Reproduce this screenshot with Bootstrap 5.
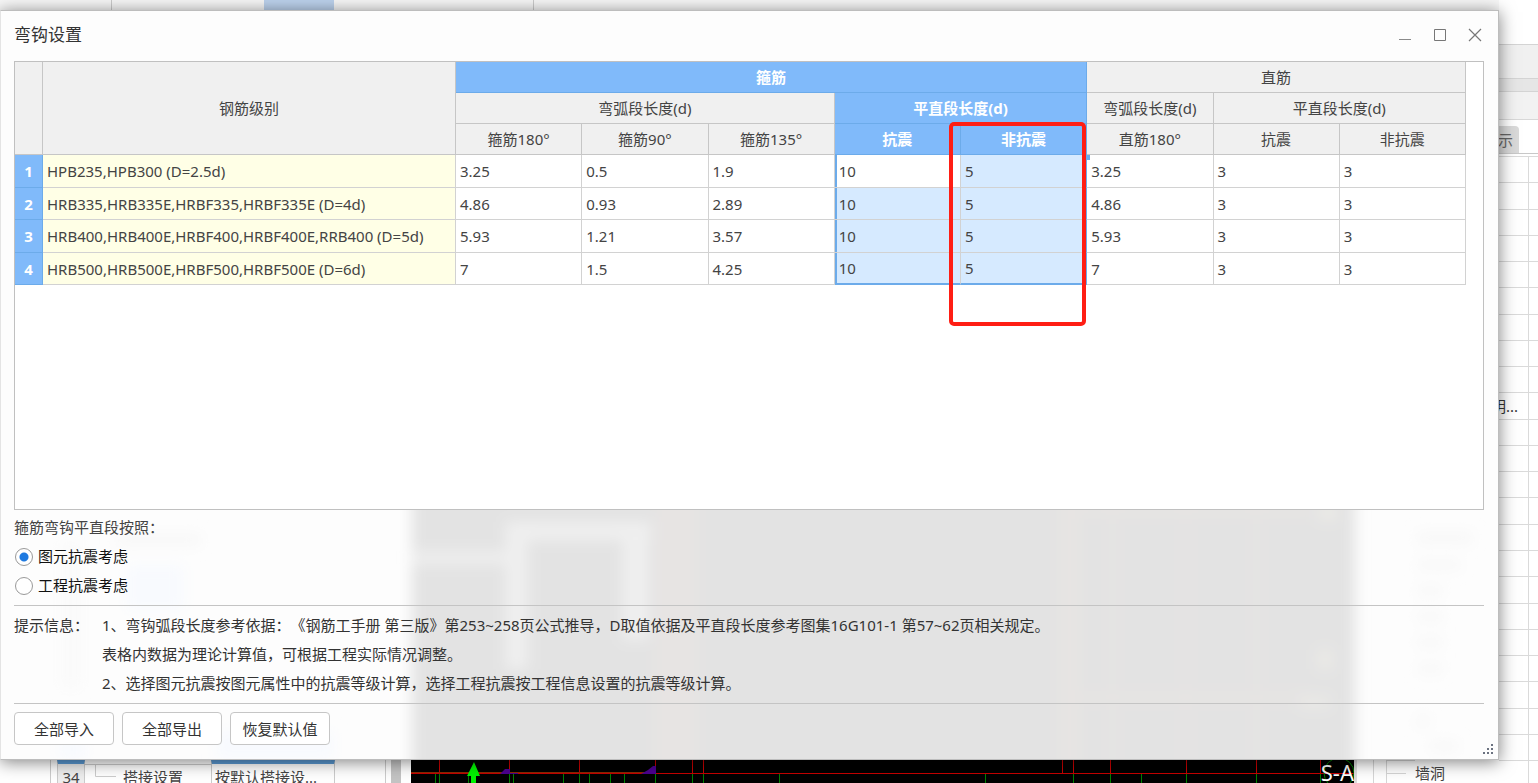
<!DOCTYPE html>
<html lang="zh-CN">
<head>
<meta charset="utf-8">
<meta name="viewport" content="width=device-width, initial-scale=1">
<title>弯钩设置</title>
<link href="https://cdn.jsdelivr.net/npm/bootstrap@5.3.0/dist/css/bootstrap.min.css" rel="stylesheet">
<style>
  :root { --line: #c6c6c6; --sel: #80bafa; --sel-line: #6cabea; --sel-soft: #d6eaff; }
  body { font: 15px/20px "Noto Sans", "Noto Sans CJK SC", sans-serif; color: #444; background: #fff; text-spacing-trim: space-all; }
  .desk { display: grid; grid-template: 10px 1fr 23px / minmax(0, 1fr) 39px; min-height: 100vh; overflow: hidden; }

  /* application window behind the dialog */
  .ribbon-strip { grid-column: 1; background: #f8f8f8; }
  .ribbon-strip > span { border-right: 1px solid #ccc; }
  .ribbon-a { width: 112px; }
  .ribbon-b { width: 152px; border: 0 !important; }
  .ribbon-on { width: 70px; background: #bdd3ee; border: 0 !important; }
  .ribbon-c { width: 200px; }
  .side-strip { grid-area: 1 / 2 / 4 / 3; }
  .side-a { height: 44px; }
  .side-b { height: 34px; background: #f0f0f0; border-top: 1px solid #d4d4d4; }
  .side-c { height: 14px; background: #e6e6e6; border: solid #d4d4d4; border-width: 1px 0; }
  .side-d { height: 28px; background: #f2f2f2; border-bottom: 1px solid #d8d8d8; }
  .side-tabs { height: 34px; border-bottom: 1px solid #c8c8c8; }
  .side-tab { width: 20px; height: 27px; padding-right: 6px; background: #d9d9d9; border-radius: 0 4px 0 0; color: #666; }
  .side-gap { height: 3px; border-bottom: 1px solid #dadada; }
  .side-row { flex: 1 1 0; border-bottom: 1px solid #dadada; min-height: 0; }
  .side-row > span { width: 30px; height: 100%; border-right: 1px solid #dadada; padding-right: 10px; overflow: hidden; white-space: nowrap; color: #333; }
  .side-last { flex: 0 0 22px; border: 0; }

  .foot-strip { grid-area: 3 / 1; overflow: hidden; height: 23px; }
  .foot-tree { width: 411px; line-height: 26px; }
  .foot-tree > * { height: 33px; white-space: nowrap; }
  .ft-margin { width: 51px; border-right: 1px solid #ccc; }
  .ft-space { width: 6px; }
  .ft-num { width: 28px; background: #eee; border: solid #ccc; border-width: 0 1px; border-top: 4px solid #5b9bd5; text-align: center; }
  .ft-branch { width: 38px; }
  .ft-name { width: 88px; border-top: 1px solid #ccc; margin-top: 4px; line-height: 24px; }
  .ft-value { width: 124px; border: solid #ccc; border-width: 0 1px; border-top: 4px solid #5b9bd5; padding-left: 3px; }
  .ft-rest { width: 51px; border-right: 1px solid #ccc; }
  .ft-bar { width: 10px; background: #c4c4c4; margin-left: 5px; }
  .cad { background: #000; overflow: hidden; }
  .cad-name { position: absolute; right: 0; top: 0; color: #fff; font-size: 22px; line-height: 24px; }
  .foot-side { width: 145px; border-left: 3px solid #ddd; line-height: 27px; color: #444; }

  /* dialog */
  .dlg { grid-area: 2 / 1; z-index: 2; background: #fdfdfd; border: 1px solid #bdbdbd; border-left-color: #e4e4e4; box-shadow: 0 2px 16px rgba(0,0,0,.5); padding: 0 14px 0 13px; }
  .dlg-head { height: 50px; margin-right: -8px; padding-bottom: 3px; }
  .dlg-title { font-size: 17px; line-height: 24px; margin: 0; font-weight: 400; color: #333; }
  .win-btn { width: 35px; height: 30px; border: 0; background: none; padding: 0; }
  .win-btn svg { display: block; margin: auto; }
  .sheet { border: 1px solid #c0c0c0; background: #fff; padding-right: 17px; min-height: 260px; }
  .hooks { table-layout: fixed; border-collapse: separate; border-spacing: 0; width: 100%; }
  .hooks .c-no { width: 28px; }
  .hooks .c-grade { width: 413px; }
  .hooks th, .hooks td { border: solid #d2d2d2; border-width: 0 1px 1px 0; height: 32px; padding: 0 4px; white-space: nowrap; }
  .hooks tbody tr:nth-child(odd) > * { height: 33px; }
  .hooks thead th { height: 31px; background: #f0f0f0; border-color: var(--line); font-weight: 400; text-align: center; }
  .hooks thead th.on, .hooks tbody th { background: var(--sel); border-color: var(--sel-line); color: #fff; font-weight: 700; text-align: center; }
  .hooks .grade { background: #ffffe6; }
  .hooks .pick { background: var(--sel-soft); }
  .hooks .edge-l { box-shadow: inset 2px 0 var(--sel-line); }
  .hooks .edge-r { border-right: 2px solid var(--sel-line); }
  .hooks tbody tr:last-child .edge-l, .hooks tbody tr:last-child .edge-r { border-bottom: 2px solid var(--sel-line); }
  .marker { position: absolute; z-index: 3; top: -2px; left: -12px; right: 0; height: 204px; border: 4px solid #ff1e14; border-radius: 5px; }
  .grip-dot { position: absolute; z-index: 2; right: -4px; bottom: -6px; width: 4px; height: 5px; background: var(--sel-line); }

  .lower { margin: 0 -14px 0 -13px; padding: 3px 14px 14px 13px; }
  .frost { position: absolute; left: 0; top: 0; width: 100%; height: 100%; }
  .opt-line { line-height: 29px; height: 29px; }
  .opt-line .form-check-input { width: 18px; height: 18px; margin: 0 5px 0 1px; border: 1px solid #999; background-color: #fff; box-shadow: none; }
  .opt-line .form-check-input:checked { background-image: radial-gradient(circle, #1f7ae0 0 4px, transparent 5px); }
  .opt-line label { color: #111; }
  .rule { border: 0; border-top: 1px solid #c4c4c4; opacity: 1; margin: 5px 0; }
  .tips { line-height: 29px; color: #333; }
  .tips-label { width: 88px; flex: none; }
  .act { width: 100px; height: 33px; padding: 0; border: 1px solid #c6c6c6; border-radius: 4px; background: #fff; color: #333; font-size: 15px; line-height: 20px; }
  .act:hover { background: #f3f8ff; border-color: var(--sel-line); }
  .size-grip { position: absolute; right: 3px; bottom: 3px; }
</style>
</head>
<body>
<div class="desk">
  <div class="ribbon-strip d-flex">
    <span class="ribbon-a"></span><span class="ribbon-b"></span><span class="ribbon-on"></span><span class="ribbon-c"></span>
  </div>

  <main class="dlg d-flex flex-column position-relative" role="dialog" aria-labelledby="dlgTitle">
    <header class="dlg-head d-flex align-items-center">
      <h1 class="dlg-title flex-grow-1" id="dlgTitle">弯钩设置</h1>
      <button class="win-btn" type="button" aria-label="最小化"><svg width="14" height="14" fill="none" stroke="#8a8a8a"><path d="M1 11.500h12"/></svg></button>
      <button class="win-btn" type="button" aria-label="最大化"><svg width="14" height="14" fill="none" stroke="#777"><path d="M1.500 1.500h11v11h-11z"/></svg></button>
      <button class="win-btn" type="button" aria-label="关闭"><svg width="14" height="14" fill="none" stroke="#777" stroke-width="1.200"><path d="M1 1l12 12M13 1L1 13"/></svg></button>
    </header>

    <section class="sheet flex-grow-1">
      <table class="hooks">
        <colgroup><col class="c-no"><col class="c-grade"><col span="8"></colgroup>
        <thead>
          <tr><th rowspan="3"></th><th rowspan="3">钢筋级别</th><th colspan="5" class="on">箍筋</th><th colspan="3">直筋</th></tr>
          <tr><th colspan="3">弯弧段长度(d)</th><th colspan="2" class="on">平直段长度(d)</th><th>弯弧段长度(d)</th><th colspan="2">平直段长度(d)</th></tr>
          <tr><th>箍筋180°</th><th>箍筋90°</th><th>箍筋135°</th><th class="on">抗震</th><th class="on position-relative">非抗震<span class="marker"></span><span class="grip-dot"></span></th><th>直筋180°</th><th>抗震</th><th>非抗震</th></tr>
        </thead>
        <tbody>
          <tr><th>1</th><td class="grade">HPB235,HPB300 (D=2.5d)</td><td>3.25</td><td>0.5</td><td>1.9</td><td class="edge-l">10</td><td class="pick edge-r">5</td><td>3.25</td><td>3</td><td>3</td></tr>
          <tr><th>2</th><td class="grade">HRB335,HRB335E,HRBF335,HRBF335E (D=4d)</td><td>4.86</td><td>0.93</td><td>2.89</td><td class="pick edge-l">10</td><td class="pick edge-r">5</td><td>4.86</td><td>3</td><td>3</td></tr>
          <tr><th>3</th><td class="grade">HRB400,HRB400E,HRBF400,HRBF400E,RRB400 (D=5d)</td><td>5.93</td><td>1.21</td><td>3.57</td><td class="pick edge-l">10</td><td class="pick edge-r">5</td><td>5.93</td><td>3</td><td>3</td></tr>
          <tr><th>4</th><td class="grade">HRB500,HRB500E,HRBF500,HRBF500E (D=6d)</td><td>7</td><td>1.5</td><td>4.25</td><td class="pick edge-l">10</td><td class="pick edge-r">5</td><td>7</td><td>3</td><td>3</td></tr>
        </tbody>
      </table>
    </section>

    <section class="lower position-relative">
      <!-- frosted view of the drawing area under the dialog -->
      <svg class="frost" viewBox="0 0 1498 250" preserveAspectRatio="none" aria-hidden="true">
        <defs>
          <filter id="soft" x="-10%" y="-30%" width="120%" height="160%"><feGaussianBlur stdDeviation="7"/></filter>
        </defs>
        <g filter="url(#soft)">
          <path fill="#e3e3e3" d="M411-30h944v310H411z"/>
          <path fill="#efefef" d="M505 12h145v18H505zM505 20h22v140h-22zM411 42h100v12H411zM622 20h26v110h-26z"/>
          <path fill="#e7e4e3" d="M655-20h40v290h-40zM1060-10h18v280h-18zM1110-10h5v270h-5zM1183-10h5v270h-5zM1254-10h5v270h-5zM1060 184h250v8h-250zM1060-5h250v10h-250z"/>
          <path fill="#ebeae6" d="M1318-5h20v15h-20zM1318 140h14v20h-14zM1300 188h30v10h-30z"/>
          <path fill="#f7f7f7" d="M115 24h85v12h-85zM1417 22h56v12h-56zM1417 50h44v10h-44zM1417 76h26v10h-26zM1417 102h26v10h-26zM1417 128h26v10h-26zM1417 154h26v10h-26zM1417 206h12v12h-12zM1430 232h28v10h-28z"/>
          <path fill="#fafafa" d="M60 30h20v150H60z"/>
          <path fill="#f8fafe" d="M125 55h58v45h-58zM57 230h28v20H57zM215 222h118v28H215z"/>
        </g>
      </svg>
      <div class="position-relative">
        <div class="opt-line" id="basis">箍筋弯钩平直段按照：</div>
        <div role="radiogroup" aria-labelledby="basis">
          <div class="opt-line d-flex align-items-center"><input class="form-check-input" type="radio" name="basis" id="byPart" checked><label for="byPart">图元抗震考虑</label></div>
          <div class="opt-line d-flex align-items-center"><input class="form-check-input" type="radio" name="basis" id="byProject"><label for="byProject">工程抗震考虑</label></div>
        </div>
        <hr class="rule">
        <div class="tips d-flex">
          <div class="tips-label">提示信息：</div>
          <div>
            <div>1、弯钩弧段长度参考依据：《钢筋工手册 第三版》第253~258页公式推导，D取值依据及平直段长度参考图集16G101-1 第57~62页相关规定。</div>
            <div>表格内数据为理论计算值，可根据工程实际情况调整。</div>
            <div>2、选择图元抗震按图元属性中的抗震等级计算，选择工程抗震按工程信息设置的抗震等级计算。</div>
          </div>
        </div>
        <hr class="rule mb-0">
        <div class="d-flex gap-2 pt-2">
          <button class="act" type="button">全部导入</button>
          <button class="act" type="button">全部导出</button>
          <button class="act" type="button">恢复默认值</button>
        </div>
      </div>
      <svg class="size-grip" width="12" height="12" fill="#6b7280" aria-hidden="true"><path d="M8 0h2v2H8zM4 4h2v2H4zM8 4h2v2H8zM0 8h2v2H0zM4 8h2v2H4zM8 8h2v2H8z"/></svg>
    </section>
  </main>

  <div class="foot-strip d-flex">
    <div class="foot-tree d-flex flex-shrink-0">
      <span class="ft-margin"></span><span class="ft-space"></span>
      <span class="ft-num">34</span>
      <svg class="ft-branch" fill="none" stroke="#ccc"><path d="M0 4.500h38M10.500 4v12.500H31"/></svg>
      <span class="ft-name">搭接设置</span>
      <span class="ft-value">按默认搭接设...</span>
      <span class="ft-rest"></span><span class="ft-bar"></span>
    </div>
    <div class="cad flex-grow-1 position-relative">
      <svg class="d-block w-100" height="23" viewBox="0 0 943 23" preserveAspectRatio="xMinYMin slice" fill="none" aria-hidden="true">
        <path stroke="#008200" d="M24.500 13v10M28.500 13v10M57.500 13v10M98.500 13v10M102.500 13v10M152.500 13v10M168.500 13v10M178.500 13v10M199.500 13v10M213.500 13v10M244.500 13v10M281.500 13v10M292.500 13v10M368.500 13v10M574.500 13v10M662.500 13v10M699.500 13v10M730.500 13v10M775.500 13v10M845.500 13v10M909.500 13v10"/>
        <path stroke="#c80000" d="M28.500 0v13M98.500 0v13M168.500 0v13M244.500 0v13M281.500 0v13M292.500 0v13M651.500 0v13M662.500 0v13M699.500 0v13M775.500 0v13M845.500 0v13M909.500 0v13M0 13.500h943"/>
        <path stroke="#8c2a00" d="M0 12.500h244"/>
        <path fill="#4b0090" d="M89 14l5-5h5v4h8v1zM230 14l7-4 5-4h3v8z"/>
        <ellipse cx="928" cy="13" rx="15" ry="15" stroke="#008200"/>
        <path fill="#00f400" d="M63 2l6 14h-4v8h-5v-8h-4z"/>
      </svg>
      <span class="cad-name">S-A</span>
    </div>
    <div class="foot-side d-flex flex-shrink-0">
      <svg width="58" height="23" fill="none" stroke="#d6d6d6"><path d="M16.500 0v23M29.500 0v23M29 .5h29M29 13.500h20"/></svg>
      <span>墙洞</span>
    </div>
  </div>

  <aside class="side-strip d-flex flex-column">
    <div class="side-a"></div><div class="side-b"></div><div class="side-c"></div><div class="side-d"></div>
    <div class="side-tabs d-flex align-items-end"><span class="side-tab d-flex align-items-center justify-content-end overflow-hidden">示</span></div>
    <div class="side-gap"></div>
    <div class="side-row"><span class="d-block"></span></div>
    <div class="side-row"><span class="d-block"></span></div>
    <div class="side-row"><span class="d-block"></span></div>
    <div class="side-row"><span class="d-block"></span></div>
    <div class="side-row"><span class="d-block"></span></div>
    <div class="side-row"><span class="d-block"></span></div>
    <div class="side-row"><span class="d-block"></span></div>
    <div class="side-row"><span class="d-block"></span></div>
    <div class="side-row"><span class="d-block"></span></div>
    <div class="side-row"><span class="d-flex align-items-center justify-content-end">明...</span></div>
    <div class="side-row"><span class="d-block"></span></div>
    <div class="side-row"><span class="d-block"></span></div>
    <div class="side-row"><span class="d-block"></span></div>
    <div class="side-row"><span class="d-block"></span></div>
    <div class="side-row"><span class="d-block"></span></div>
    <div class="side-row"><span class="d-block"></span></div>
    <div class="side-row"><span class="d-block"></span></div>
    <div class="side-row"><span class="d-block"></span></div>
    <div class="side-row"><span class="d-block"></span></div>
    <div class="side-row"><span class="d-block"></span></div>
    <div class="side-row"><span class="d-block"></span></div>
    <div class="side-row"><span class="d-block"></span></div>
    <div class="side-row"><span class="d-block"></span></div>
    <div class="side-row side-last"><span class="d-block"></span></div>
  </aside>
</div>
<script src="https://cdn.jsdelivr.net/npm/bootstrap@5.3.0/dist/js/bootstrap.bundle.min.js"></script>
</body>
</html>
